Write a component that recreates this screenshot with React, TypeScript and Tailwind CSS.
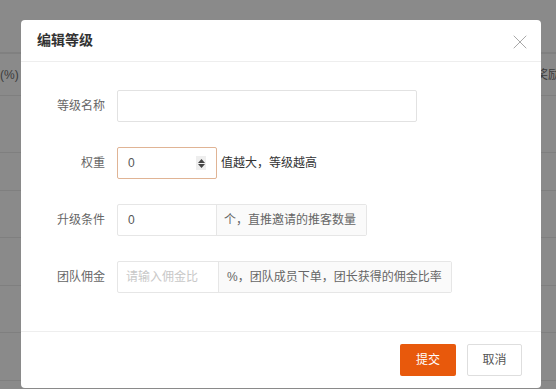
import { X } from 'lucide-react';

function Spinner() {
  return (
    <span className="flex h-[14px] w-[10px] flex-col items-center justify-center gap-[1px] bg-[#eeeeee]">
      <svg width="7" height="4" viewBox="0 0 7 4">
        <path d="M3.5 0 L7 4 L0 4 Z" fill="#444" />
      </svg>
      <svg width="7" height="4" viewBox="0 0 7 4">
        <path d="M0 0 L7 0 L3.5 4 Z" fill="#444" />
      </svg>
    </span>
  );
}

export default function App() {
  const bgRows = [57, 38, 47, 48, 47, 48, 40];

  return (
    <div className="relative h-[389px] w-[556px] overflow-hidden bg-[#8a8a8a] font-['Liberation_Sans','Noto_Sans_CJK_SC',sans-serif]">
      {/* page behind the mask */}
      <div className="pt-[52px]">
        <div className="flex h-[43px] items-center justify-between border-t-2 border-[#808080] text-[12px] text-[#3c3c3c]">
          <span>(%)</span>
          <span className="-mr-[4px]">奖励</span>
        </div>
        {bgRows.map((h, i) => (
          <div key={i} className="border-t border-[#7f7f7f]" style={{ height: h }} />
        ))}
      </div>

      {/* dialog */}
      <div className="absolute left-[21px] top-[20px] flex h-[368px] w-[520px] flex-col rounded-[4px] bg-white">
        <div className="flex h-[42px] items-center justify-between border-b border-[#eeeeee] pl-[16px] pr-[9px]">
          <h2 className="text-[14px] font-semibold text-[#333333]">编辑等级</h2>
          <X className="mt-[2px] h-[24px] w-[24px] text-[#a8a8a8]" strokeWidth={1} />
        </div>

        <div className="flex flex-col gap-[25px] pb-[38px] pt-[28px] text-[12px]">
          <div className="flex items-center">
            <label className="w-[96px] pr-[12px] text-right text-[#666666]">等级名称</label>
            <input className="h-[32px] w-[300px] rounded-[2px] border border-[#e2e2e2] px-[10px] outline-none" />
          </div>

          <div className="flex items-center">
            <label className="w-[96px] pr-[12px] text-right text-[#666666]">权重</label>
            <div className="flex h-[32px] w-[100px] items-center justify-between rounded-[2px] border border-[#e0b495] pl-[10px] pr-[10px] text-[#555555]">
              <span>0</span>
              <Spinner />
            </div>
            <span className="ml-[4px] text-[#333333]">值越大，等级越高</span>
          </div>

          <div className="flex items-center">
            <label className="w-[96px] pr-[12px] text-right text-[#666666]">升级条件</label>
            <div className="flex h-[32px] items-stretch rounded-[2px] border border-[#e6e6e6]">
              <span className="flex w-[98px] items-center pl-[10px] text-[#555555]">0</span>
              <span className="flex w-[150px] items-center border-l border-[#e6e6e6] bg-[#fafafa] pl-[7px] text-[#666666]">
                个，直推邀请的推客数量
              </span>
            </div>
          </div>

          <div className="flex items-center">
            <label className="w-[96px] pr-[12px] text-right text-[#666666]">团队佣金</label>
            <div className="flex h-[32px] items-stretch rounded-[2px] border border-[#e6e6e6]">
              <span className="flex w-[100px] items-center pl-[8px] text-[#c8c8c8]">请输入佣金比</span>
              <span className="flex w-[233px] items-center border-l border-[#e6e6e6] bg-[#fafafa] pl-[8px] text-[#666666]">
                %，团队成员下单，团长获得的佣金比率
              </span>
            </div>
          </div>
        </div>

        <div className="flex justify-end gap-[11px] border-t border-[#eeeeee] pr-[19px] pt-[12px] text-[12px]">
          <button className="h-[32px] w-[56px] rounded-[2px] bg-[#e8590c] text-white">提交</button>
          <button className="h-[32px] w-[55px] rounded-[2px] border border-[#dedede] bg-white text-[#555555]">取消</button>
        </div>
      </div>
    </div>
  );
}
